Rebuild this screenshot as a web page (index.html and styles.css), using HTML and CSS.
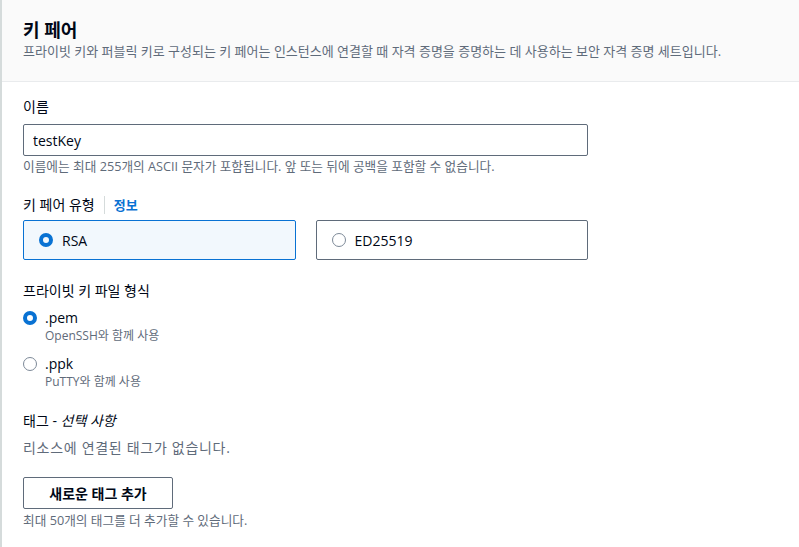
FILE: index.html
```html
<!DOCTYPE html>
<html lang="ko">

<head>
    <meta charset="UTF-8">
    <title>키 페어</title>
    <link rel="stylesheet" href="styles.css">
</head>

<body>
    <div class="panel">
        <div class="panel-header">
            <h2>키 페어</h2>
            <p class="desc">프라이빗 키와 퍼블릭 키로 구성되는 키 페어는 인스턴스에 연결할 때 자격 증명을 증명하는 데 사용하는 보안 자격 증명 세트입니다.</p>
        </div>

        <div class="panel-body">
            <!-- 이름 -->
            <div class="field">
                <label class="label" for="keyName">이름</label>
                <input type="text" id="keyName" class="text-input" value="testKey">
                <p class="hint">이름에는 최대 255개의 ASCII 문자가 포함됩니다. 앞 또는 뒤에 공백을 포함할 수 없습니다.</p>
            </div>

            <!-- 키 페어 유형 -->
            <div class="field">
                <div class="label label-tight">키 페어 유형<span class="info-link">정보</span></div>
                <div class="tiles">
                    <div class="tile selected">
                        <span class="radio checked"></span>
                        <span>RSA</span>
                    </div>
                    <div class="tile">
                        <span class="radio"></span>
                        <span>ED25519</span>
                    </div>
                </div>
            </div>

            <!-- 파일 형식 -->
            <div class="field">
                <div class="label">프라이빗 키 파일 형식</div>
                <div class="option">
                    <span class="radio checked"></span>
                    <div>
                        <div class="option-title">.pem</div>
                        <div class="option-desc">OpenSSH와 함께 사용</div>
                    </div>
                </div>
                <div class="option">
                    <span class="radio"></span>
                    <div>
                        <div class="option-title">.ppk</div>
                        <div class="option-desc">PuTTY와 함께 사용</div>
                    </div>
                </div>
            </div>

            <!-- 태그 -->
            <div class="field">
                <div class="label">태그 - <i>선택 사항</i></div>
                <p class="empty">리소스에 연결된 태그가 없습니다.</p>
                <button class="btn">새로운 태그 추가</button>
                <p class="hint hint-last">최대 50개의 태그를 더 추가할 수 있습니다.</p>
            </div>
        </div>
    </div>
</body>

</html>
```

FILE: styles.css
```css
body {
    margin: 0;
    font-family: "Open Sans", "Noto Sans CJK KR", sans-serif;
    color: #000716;
    background-color: #ffffff;
}

.panel {
    border-left: 2px solid #d5dbdb;
    min-height: 547px;
}

.panel-header {
    background-color: #fafafa;
    border-bottom: 1px solid #e9ebed;
    padding: 17px 21px 22px;
}

.panel-header h2 {
    margin: 0;
    font-size: 18px;
    line-height: 26px;
    font-weight: 700;
}

.desc {
    margin: 0;
    font-size: 13px;
    line-height: 16px;
    color: #5f6b7a;
}

.panel-body {
    padding: 14px 21px 0;
}

.field {
    margin-bottom: 20px;
}

.label {
    display: block;
    font-size: 14px;
    line-height: 22px;
    margin-bottom: 6px;
}

.label-tight {
    margin-bottom: 4px;
}

.info-link {
    color: #0972d3;
    font-size: 13px;
    font-weight: 700;
    border-left: 1px solid #d5dbdb;
    padding-left: 9px;
    margin-left: 9px;
}

.text-input {
    display: block;
    box-sizing: border-box;
    width: 565px;
    height: 32px;
    padding: 4px 9px;
    border: 1px solid #5f6b7a;
    border-radius: 2px;
    font-family: inherit;
    font-size: 14px;
    color: #000716;
}

.hint {
    margin: 2px 0 3px;
    font-size: 12.7px;
    line-height: 16px;
    color: #5f6b7a;
}

.hint-last {
    margin-top: 3px;
}

.tiles {
    display: flex;
    gap: 20px;
    width: 565px;
}

.tile {
    box-sizing: border-box;
    flex: 1;
    height: 40px;
    display: flex;
    align-items: center;
    gap: 9px;
    padding: 0 15px;
    border: 1px solid #5f6b7a;
    border-radius: 2px;
    font-size: 14px;
}

.tile.selected {
    border-color: #0972d3;
    background-color: #f2f8fd;
}

.radio {
    box-sizing: border-box;
    width: 14px;
    height: 14px;
    border-radius: 50%;
    border: 1.5px solid #7d8998;
    flex-shrink: 0;
}

.radio.checked {
    border: 4px solid #0972d3;
}

.option {
    display: flex;
    gap: 8px;
    margin-bottom: 10px;
}

.option:last-child {
    margin-bottom: 2px;
}

.option .radio {
    margin-top: 3px;
}

.option-title {
    font-size: 14px;
    line-height: 20px;
}

.option-desc {
    font-size: 12px;
    line-height: 16px;
    color: #5f6b7a;
}

.empty {
    margin: 0 0 19px;
    font-size: 14px;
    line-height: 20px;
    letter-spacing: 0.7px;
    color: #5f6b7a;
}

.btn {
    box-sizing: border-box;
    width: 150px;
    height: 32px;
    background-color: #ffffff;
    border: 1px solid #5f6b7a;
    border-radius: 2px;
    font-family: inherit;
    font-size: 14px;
    font-weight: 700;
    color: #000716;
    cursor: pointer;
}
```
